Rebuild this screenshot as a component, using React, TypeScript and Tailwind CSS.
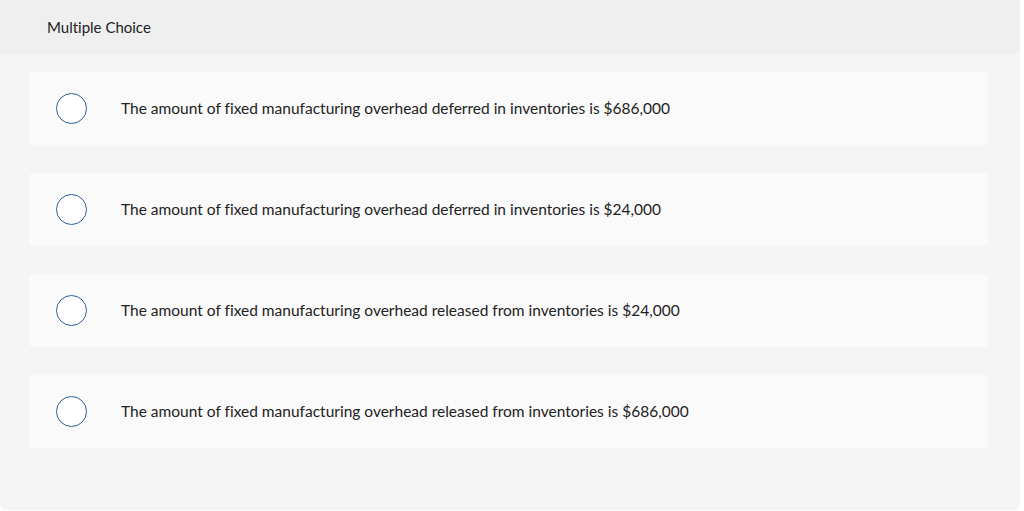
export default function App() {
  const options = [
    'The amount of fixed manufacturing overhead deferred in inventories is $686,000',
    'The amount of fixed manufacturing overhead deferred in inventories is $24,000',
    'The amount of fixed manufacturing overhead released from inventories is $24,000',
    'The amount of fixed manufacturing overhead released from inventories is $686,000',
  ];

  return (
    <div
      className="w-full min-h-[511px] bg-white [font-variant-ligatures:none]"
      style={{ fontFamily: 'Lato, "Open Sans", sans-serif' }}
    >
      <div className="w-[1020px] h-[510px] bg-[#f5f5f5] rounded-b-[6px] flex flex-col">
        <div className="h-[54px] bg-[#efefef] flex items-center pl-[47px]">
          <span className="text-[15px] text-[#222]">Multiple Choice</span>
        </div>
        <div className="flex flex-col gap-[28px] pt-[18px] pl-[29px] w-[988px]">
          {options.map((t) => (
            <label key={t} className="h-[73px] bg-[#fafafa] rounded-[4px] flex items-center cursor-pointer">
              <span className="ml-[27px] w-[31px] h-[31px] rounded-full border-[1.5px] border-[#2c5e97] bg-white shrink-0" />
              <span className="ml-[34px] text-[15.5px] text-[#222]">{t}</span>
            </label>
          ))}
        </div>
      </div>
    </div>
  );
}
